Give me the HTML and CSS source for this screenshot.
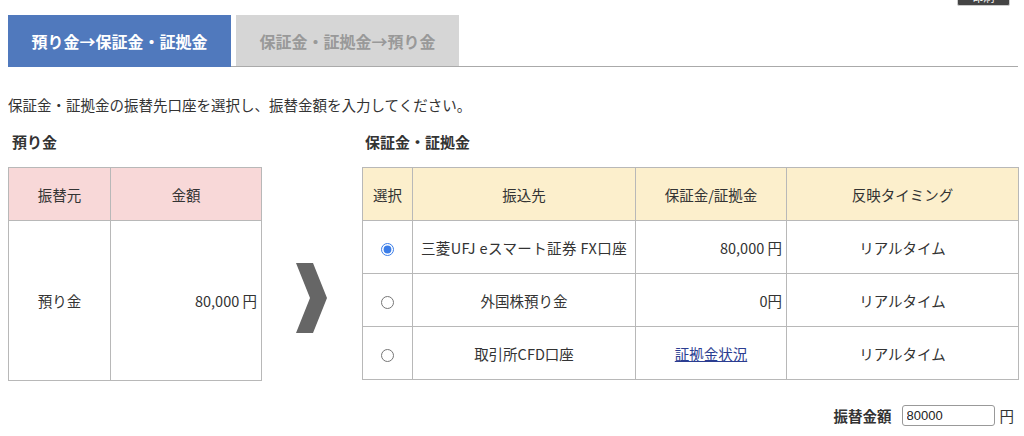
FILE: index.html
```html
<!DOCTYPE html>
<html lang="ja">
<head>
<meta charset="utf-8">
<title>振替</title>
<link rel="stylesheet" href="styles.css">
</head>
<body>
<div class="corner-btn">印刷</div>
<div class="page">
  <div class="tabs">
    <div class="tab active">預り金→保証金・証拠金</div>
    <div class="tab">保証金・証拠金→預り金</div>
  </div>
  <p class="lead">保証金・証拠金の振替先口座を選択し、振替金額を入力してください。</p>
  <div class="main">
    <section class="left">
      <h2 class="heading">預り金</h2>
      <table class="tbl src">
        <colgroup><col class="c-src"><col class="c-amt"></colgroup>
        <thead><tr><th>振替元</th><th>金額</th></tr></thead>
        <tbody><tr class="tall"><td>預り金</td><td class="num">80,000 円</td></tr></tbody>
      </table>
    </section>
    <div class="arrow">
      <svg width="32" height="72" viewBox="0 0 32 72"><polygon points="0,0 17,0 31,35 17,70 0,70 14,35" fill="#666"/></svg>
    </div>
    <section class="right">
      <h2 class="heading r">保証金・証拠金</h2>
      <table class="tbl dst">
        <colgroup><col class="c-sel"><col class="c-to"><col class="c-bal"><col class="c-time"></colgroup>
        <thead><tr><th>選択</th><th>振込先</th><th>保証金/証拠金</th><th>反映タイミング</th></tr></thead>
        <tbody>
          <tr><td><input type="radio" name="to" checked></td><td class="wide">三菱UFJ eスマート証券 FX口座</td><td class="num">80,000 円</td><td>リアルタイム</td></tr>
          <tr><td><input type="radio" name="to"></td><td>外国株預り金</td><td class="num">0円</td><td>リアルタイム</td></tr>
          <tr><td><input type="radio" name="to"></td><td>取引所CFD口座</td><td><a href="#">証拠金状況</a></td><td>リアルタイム</td></tr>
        </tbody>
      </table>
    </section>
  </div>
  <div class="amount">
    <label class="amount-label">振替金額</label>
    <input class="amount-input" type="text" value="80000">
    <span class="yen">円</span>
  </div>
</div>
</body>
</html>
```
FILE: styles.css
```css
* { box-sizing: border-box; }
body {
  margin: 0;
  font-family: "Noto Sans CJK JP", "Noto Sans", sans-serif;
  font-size: 14.5px;
  color: #333;
  background: #fff;
  position: relative;
  width: 1024px;
  height: 436px;
  overflow: hidden;
}
.corner-btn {
  position: absolute;
  top: -12px;
  left: 957px;
  width: 53px;
  height: 18px;
  background: #444;
  border: 1px solid #ccc;
  border-radius: 2px;
  color: #fff;
  font-size: 11px;
  text-align: center;
  line-height: 16px;
}
.page { padding: 15px 6px 0 8px; }
.tabs {
  display: flex;
  gap: 5px;
  border-bottom: 1px solid #aaa;
  height: 52px;
}
.tab {
  width: 223px;
  height: 51px;
  background: #d6d6d6;
  color: #999;
  font-weight: bold;
  font-size: 16px;
  display: flex;
  align-items: center;
  justify-content: center;
}
.tab.active {
  background: #5079bd;
  color: #fff;
  height: 52px;
}
.lead {
  margin: 26px 0 0 0;
  line-height: 24px;
}
.main {
  display: flex;
  margin-top: 17px;
}
.left { width: 253px; }
.arrow {
  width: 101px;
  display: flex;
  align-items: flex-start;
  padding: 129px 0 0 35px;
}
.right { width: 656px; }
.heading {
  margin: 0 0 17px 0;
  font-size: 15px;
  font-weight: bold;
  line-height: 16px;
  padding-left: 4px;
}
.heading.r { padding-left: 3px; }
.tbl {
  border-collapse: collapse;
  width: 100%;
  table-layout: fixed;
}
.tbl th, .tbl td {
  border: 1px solid #b8b8b8;
  text-align: center;
  font-weight: normal;
  padding: 0 4px;
  height: 53px;
}
.tbl td.wide { letter-spacing: 0.4px; padding: 0 2px; }
.src th { background: #f8d8d8; }
.dst th { background: #fcefcc; }
.src tr.tall td { height: 160px; }
.c-src { width: 102px; }
.c-amt { width: 151px; }
.c-sel { width: 50px; }
.c-to { width: 223px; }
.c-bal { width: 151px; }
.c-time { width: 232px; }
.tbl td.num { text-align: right; }
.tbl a { color: #2b3d91; }
.tbl input[type=radio] { margin: 0; width: 13px; height: 13px; accent-color: #3b7de8; vertical-align: middle; }
.amount {
  display: flex;
  justify-content: flex-end;
  align-items: center;
  margin-top: 24px;
  padding-right: 4px;
}
.amount-label { font-weight: bold; margin-right: 10px; }
.amount-input {
  width: 93px;
  height: 21px;
  border: 1px solid #999;
  border-radius: 3px;
  font-family: "Liberation Sans", Arial, sans-serif;
  font-size: 13px;
  padding: 0 4px;
  color: #222;
}
.yen { margin-left: 5px; }
```
